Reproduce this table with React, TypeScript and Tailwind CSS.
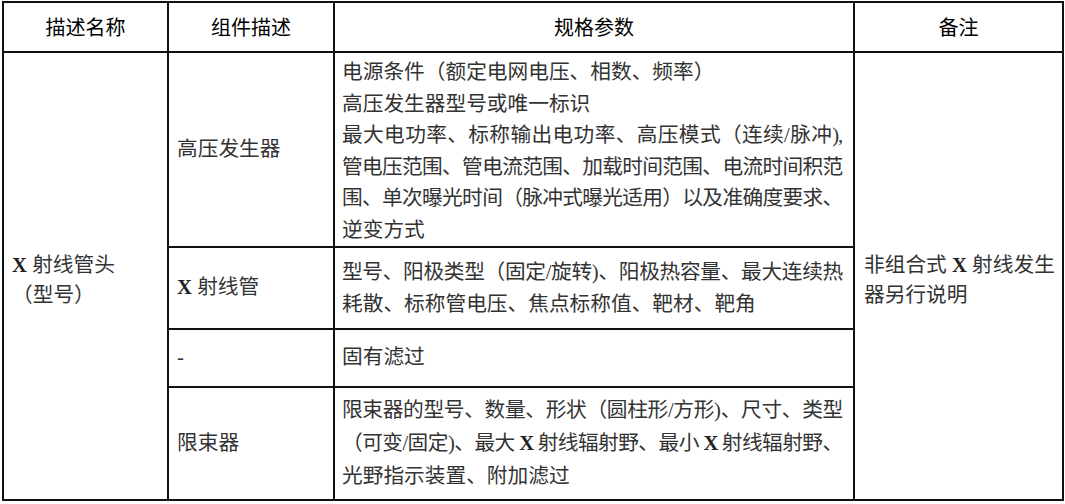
import React from "react";

const body = "font-['Liberation_Serif','Noto_Sans_CJK_SC',serif] text-[20.7px] text-[#333]";
const head = "bg-white flex items-center justify-center font-['Noto_Sans_CJK_SC',sans-serif] text-[20px] text-black";

function X() {
  return <span className="font-bold text-[#222]">X</span>;
}

// wrapped lines are squeezed and spread to the cell width, like Word does
function J({ children }: { children: React.ReactNode }) {
  return (
    <div className="w-[500px] tracking-[-1.2px] text-justify [text-align-last:justify]">{children}</div>
  );
}

function Lines({ lines }: { lines: React.ReactNode[] }) {
  return (
    <div className="whitespace-nowrap">
      {lines.map((l, i) => (
        <div key={i}>{l}</div>
      ))}
    </div>
  );
}

export default function App() {
  return (
    <div className="w-[1065px] h-[504px] bg-white pt-px pl-[2px]">
      <div
        className={`grid grid-cols-[163px_164px_518px_207px] grid-rows-[48px_193px_80px_56px_111px] gap-[2px] p-[2px] bg-[#111] w-[1062px] ${body} leading-[31.5px]`}
      >
        {/* header */}
        <div className={head}>描述名称</div>
        <div className={head}>组件描述</div>
        <div className={head}>规格参数</div>
        <div className={head}>备注</div>

        {/* merged first column */}
        <div className="bg-white row-span-4 flex items-center px-2 pt-[8px] leading-[30px]">
          <Lines lines={[<><X /> 射线管头</>, "（型号）"]} />
        </div>

        <div className="bg-white flex items-center px-2">高压发生器</div>
        <div className="bg-white pl-[7px] pt-[4px] whitespace-nowrap">
          <div>电源条件（额定电网电压、相数、频率）</div>
          <div>高压发生器型号或唯一标识</div>
          <J>最大电功率、标称输出电功率、高压模式（连续/脉冲),</J>
          <J>管电压范围、管电流范围、加载时间范围、电流时间积范</J>
          <J>围、单次曝光时间（脉冲式曝光适用）以及准确度要求、</J>
          <div>逆变方式</div>
        </div>

        {/* merged remarks column */}
        <div className="bg-white row-span-4 col-start-4 row-start-2 flex items-center px-[9px] pt-[8px] leading-[30px]">
          <Lines lines={[<>非组合式 <X /> 射线发生</>, "器另行说明"]} />
        </div>

        <div className="bg-white flex items-center px-2 col-start-2">
          <span><X /> 射线管</span>
        </div>
        <div className="bg-white flex items-center pl-[7px] col-start-3 leading-[32px]">
          <div className="whitespace-nowrap">
            <J>型号、阳极类型（固定/旋转)、阳极热容量、最大连续热</J>
            <div>耗散、标称管电压、焦点标称值、靶材、靶角</div>
          </div>
        </div>

        <div className="bg-white flex items-center px-2 col-start-2">-</div>
        <div className="bg-white flex items-center pl-[7px] col-start-3">固有滤过</div>

        <div className="bg-white flex items-center px-2 col-start-2">限束器</div>
        <div className="bg-white flex items-center pl-[7px] col-start-3 leading-[33px]">
          <div className="whitespace-nowrap">
            <J>限束器的型号、数量、形状（圆柱形/方形)、尺寸、类型</J>
            <J>（可变/固定)、最大 <X /> 射线辐射野、最小 <X /> 射线辐射野、</J>
            <div>光野指示装置、附加滤过</div>
          </div>
        </div>
      </div>
    </div>
  );
}
